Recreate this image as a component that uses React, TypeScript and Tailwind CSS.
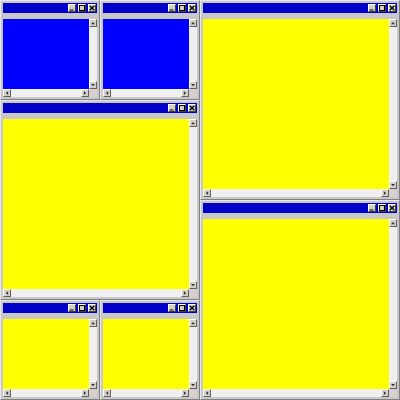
import React from "react";

type Dir = "up" | "down" | "left" | "right";

function Arrow({ dir }: { dir: Dir }) {
  const pts: Record<Dir, string> = {
    up: "4,2.5 6.5,5.5 1.5,5.5",
    down: "1.5,2.5 6.5,2.5 4,5.5",
    left: "2.5,4 5.5,1.5 5.5,6.5",
    right: "2.5,1.5 5.5,4 2.5,6.5",
  };
  return (
    <div className="w-[8px] h-[8px] shrink-0 bg-[#d4d0c8] border-t border-l border-t-[#ffffff] border-l-[#ffffff] border-r border-b border-r-[#606060] border-b-[#606060] flex items-center justify-center">
      <svg width="6" height="6" viewBox="0 0 8 8">
        <polygon points={pts[dir]} fill="#303030" />
      </svg>
    </div>
  );
}

function TitleButton({ kind }: { kind: "min" | "max" | "close" }) {
  return (
    <div className="w-[8px] h-[8px] shrink-0 bg-[#d4d0c8] border-t border-l border-t-[#ffffff] border-l-[#ffffff] border-r border-b border-r-[#404040] border-b-[#404040] flex items-center justify-center">
      <svg width="6" height="6" viewBox="0 0 6 6">
        {kind === "min" && <rect x="0.5" y="4.5" width="4" height="1" fill="#000" />}
        {kind === "max" && (
          <rect x="0.5" y="0.5" width="5" height="5" fill="none" stroke="#000" strokeWidth="1" />
        )}
        {kind === "close" && (
          <path d="M0.7 0.7 L5.3 5.3 M5.3 0.7 L0.7 5.3" stroke="#000" strokeWidth="1.3" />
        )}
      </svg>
    </div>
  );
}

function Win({ color }: { color: string }) {
  return (
    <div className="flex-1 min-w-0 min-h-0 flex flex-col bg-[#c8c8c8] border border-t-[#e8e8e8] border-l-[#e8e8e8] border-r-[#808080] border-b-[#808080] p-[2px]">
      <div className="h-[10px] shrink-0 bg-[#0000c8] flex items-center justify-end gap-[2px] pr-[1px]">
        <TitleButton kind="min" />
        <TitleButton kind="max" />
        <TitleButton kind="close" />
      </div>
      <div className="h-[6px] shrink-0" />
      <div className="flex-1 min-h-0 flex flex-col">
        <div className="flex-1 min-h-0 flex">
          <div className="flex-1" style={{ backgroundColor: color }} />
          <div className="w-[8px] bg-[#f0f0f0] flex flex-col justify-between">
            <Arrow dir="up" />
            <Arrow dir="down" />
          </div>
        </div>
        <div className="h-[8px] shrink-0 flex">
          <div className="flex-1 bg-[#f0f0f0] flex justify-between">
            <Arrow dir="left" />
            <Arrow dir="right" />
          </div>
          <div className="w-[8px] bg-[#d8d0d0]" />
        </div>
      </div>
    </div>
  );
}

export default function App() {
  const blue = "#0000ff";
  const yellow = "#ffff00";
  return (
    <div className="w-[400px] h-[400px] flex bg-[#c0c0c0]">
      <div className="w-[200px] h-full flex flex-col">
        <div className="h-[100px] flex">
          <Win color={blue} />
          <Win color={blue} />
        </div>
        <div className="h-[200px] flex">
          <Win color={yellow} />
        </div>
        <div className="h-[100px] flex">
          <Win color={yellow} />
          <Win color={yellow} />
        </div>
      </div>
      <div className="w-[200px] h-full flex flex-col">
        <div className="h-[200px] flex">
          <Win color={yellow} />
        </div>
        <div className="h-[200px] flex">
          <Win color={yellow} />
        </div>
      </div>
    </div>
  );
}
